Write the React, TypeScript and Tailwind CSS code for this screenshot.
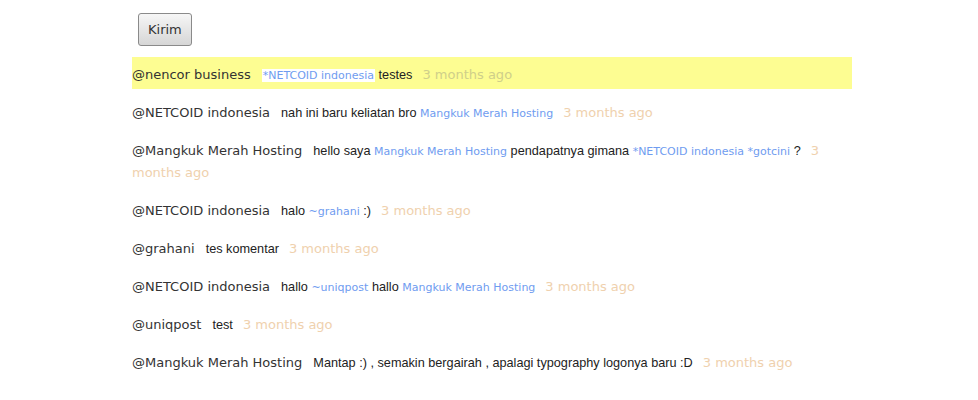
import React from "react";

type Part = { t: string; link?: boolean };
type Row = { user: string; parts: Part[]; hl?: boolean };

const rows: Row[] = [
  { user: "@nencor business", parts: [{ t: "*NETCOID indonesia", link: true }, { t: " testes" }], hl: true },
  { user: "@NETCOID indonesia", parts: [{ t: "nah ini baru keliatan bro " }, { t: "Mangkuk Merah Hosting", link: true }] },
  {
    user: "@Mangkuk Merah Hosting",
    parts: [
      { t: "hello saya " },
      { t: "Mangkuk Merah Hosting", link: true },
      { t: " pendapatnya gimana " },
      { t: "*NETCOID indonesia", link: true },
      { t: " " },
      { t: "*gotcini", link: true },
      { t: " ?" },
    ],
  },
  { user: "@NETCOID indonesia", parts: [{ t: "halo " }, { t: "~grahani", link: true }, { t: " :)" }] },
  { user: "@grahani", parts: [{ t: "tes komentar" }] },
  {
    user: "@NETCOID indonesia",
    parts: [{ t: "hallo " }, { t: "~uniqpost", link: true }, { t: " hallo " }, { t: "Mangkuk Merah Hosting", link: true }],
  },
  { user: "@uniqpost", parts: [{ t: "test" }] },
  { user: "@Mangkuk Merah Hosting", parts: [{ t: "Mantap :) , semakin bergairah , apalagi typography logonya baru :D" }] },
];

const App = () => {
  return (
    <div className="min-h-screen bg-white font-['DejaVu_Sans',sans-serif]">
      <div className="w-[720px] ml-[132px] pt-[13px]">
        <button className="ml-[6px] h-[33px] px-[9px] pt-[1px] text-[13px] text-[#333] rounded-[3px] border border-[#8a8a8a] bg-gradient-to-b from-[#f6f6f6] to-[#d6d6d6]">
          Kirim
        </button>
        <div className="mt-[11px] flex flex-col gap-[6px]">
          {rows.map((r, i) => (
            <div
              key={i}
              className={`pt-[7px] pb-[3px] text-[13px] leading-[22px] ${r.hl ? "bg-[#fdfd92]" : ""}`}
            >
              <span className="leading-none text-[#333]">{r.user}</span>
              <span className="ml-[11px] leading-none text-[12.7px] text-[#222] font-['Liberation_Sans',sans-serif]">
                {r.parts.map((p, j) =>
                  p.link ? (
                    <span
                      key={j}
                      className={`leading-none text-[11px] text-[#6f9cf0] font-['DejaVu_Sans',sans-serif] ${r.hl ? "bg-white px-[1px]" : ""}`}
                    >
                      {p.t}
                    </span>
                  ) : (
                    <span key={j}>{p.t}</span>
                  )
                )}
              </span>
              <span className={`ml-[10px] leading-none ${r.hl ? "text-[#cfcf8a]" : "text-[#efd1ae]"}`}>
                3 months ago
              </span>
            </div>
          ))}
        </div>
      </div>
    </div>
  );
};

export default App;
